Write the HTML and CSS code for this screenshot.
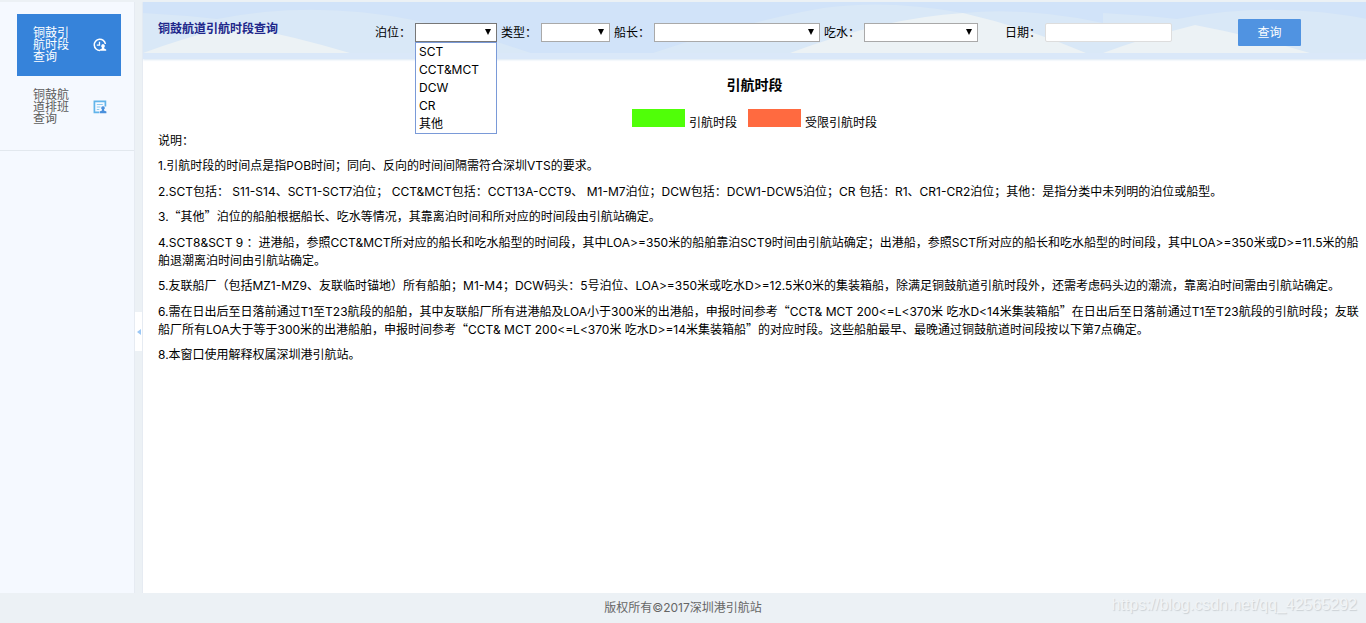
FILE: index.html
```html
<!DOCTYPE html>
<html lang="zh-CN">
<head>
<meta charset="utf-8">
<title>铜鼓航道引航时段查询</title>
<link rel="stylesheet" href="styles.css">
</head>
<body>
<div class="page">
  <div class="workspace">
    <nav class="sidebar">
      <div class="menu">
        <a class="menu-item active" href="#period">
          <span class="menu-text">铜鼓引航时段查询</span>
          <svg class="menu-icon" viewBox="0 0 14 14" fill="none" stroke="#fff">
            <path d="M7 12.4A5.6 5.6 0 1 1 12.4 6" stroke-width="1.5"/>
            <path d="M6.5 3.8V7.2H3.8" stroke-width="1.3"/>
            <path d="M10 6a2 2 0 0 1 1.2 3.5v1l2 1.1v1.2H6.9v-1.2l2-1.1v-1A2 2 0 0 1 10 6z" fill="#fff" stroke="none"/>
          </svg>
        </a>
        <a class="menu-item" href="#schedule">
          <span class="menu-text">铜鼓航道排班查询</span>
          <svg class="menu-icon" viewBox="0 0 14 14" fill="none">
            <path d="M6 12.4H1.4V1.4h11V6.5" stroke="#61b4ea" stroke-width="1.7"/>
            <path d="M3.8 4.5h6M3.8 7h3.6M3.8 9.5h2.5" stroke="#8ccaf0"/>
            <path d="M10 6.2a1.8 1.8 0 0 1 1 3.3v1.1l2.4 1v1.7H6.6v-1.7l2.4-1V9.5a1.8 1.8 0 0 1 1-3.3z" fill="#4a90dc"/>
          </svg>
        </a>
      </div>
    </nav>
    <div class="splitter">
      <button class="collapse" type="button" aria-label="收起菜单"></button>
    </div>
    <main class="main">
      <header class="toolbar">
        <svg class="waves" aria-hidden="true">
          <defs>
            <pattern id="hills" width="960" height="51" patternUnits="userSpaceOnUse">
              <rect width="960" height="51" fill="#d1e3f9"/>
              <path d="M0 11Q38 13 74 17Q170-2 270 18Q330 31 388 51H0z" fill="#d9e8f7"/>
              <path d="M0 51Q40 36 92 23Q150 34 207 51z" fill="#ecf2f5"/>
              <path d="M510 51Q605 19 680 6Q745-3 820 11Q885 5 960 21V51z" fill="#d9e8f7"/>
              <path d="M647 51Q740 16 820 11Q885 26 943 51z" fill="#ecf2f5"/>
            </pattern>
          </defs>
          <rect width="100%" height="51" fill="url(#hills)"/>
        </svg>
        <h1 class="title">铜鼓航道引航时段查询</h1>
        <form class="filters">
          <div class="field">
            <label for="berth">泊位：</label>
            <span class="select berth open">
              <select id="berth"><option></option><option>SCT</option><option>CCT&amp;MCT</option><option>DCW</option><option>CR</option><option>其他</option></select>
              <ul class="options">
                <li>SCT</li><li>CCT&amp;MCT</li><li>DCW</li><li>CR</li><li>其他</li>
              </ul>
            </span>
          </div>
          <div class="field">
            <label for="type">类型：</label>
            <span class="select type"><select id="type"><option></option></select></span>
          </div>
          <div class="field">
            <label for="length">船长：</label>
            <span class="select length"><select id="length"><option></option></select></span>
          </div>
          <div class="field">
            <label for="draft">吃水：</label>
            <span class="select draft"><select id="draft"><option></option></select></span>
          </div>
          <div class="field date-field">
            <label for="date">日期：</label>
            <input id="date" class="date" type="text">
          </div>
          <button class="submit" type="button">查询</button>
        </form>
      </header>
      <section class="content">
        <h2 class="heading">引航时段</h2>
        <div class="legend">
          <span class="swatch green"></span><span>引航时段</span>
          <span class="swatch orange"></span><span>受限引航时段</span>
        </div>
        <div class="notes">
          <p>说明：</p>
          <p>1.引航时段的时间点是指POB时间；同向、反向的时间间隔需符合深圳VTS的要求。</p>
          <p>2.SCT包括： S11-S14、SCT1-SCT7泊位； CCT&amp;MCT包括：CCT13A-CCT9、 M1-M7泊位；DCW包括：DCW1-DCW5泊位；CR 包括：R1、CR1-CR2泊位；其他：是指分类中未列明的泊位或船型。</p>
          <p>3.<span class="wide">“其他”</span>泊位的船舶根据船长、吃水等情况，其靠离泊时间和所对应的时间段由引航站确定。</p>
          <p>4.SCT8&amp;SCT 9 ：进港船，参照CCT&amp;MCT所对应的船长和吃水船型的时间段，其中LOA&gt;=350米的船舶靠泊SCT9时间由引航站确定；出港船，参照SCT所对应的船长和吃水船型的时间段，其中LOA&gt;=350米或D&gt;=11.5米的船舶退潮离泊时间由引航站确定。</p>
          <p>5.友联船厂（包括MZ1-MZ9、友联临时锚地）所有船舶；M1-M4；DCW码头：5号泊位、LOA&gt;=350米或吃水D&gt;=12.5米0米的集装箱船，除满足铜鼓航道引航时段外，还需考虑码头边的潮流，靠离泊时间需由引航站确定。</p>
          <p>6.需在日出后至日落前通过T1至T23航段的船舶，其中友联船厂所有进港船及LOA小于300米的出港船，申报时间参考<span class="wide">“</span>CCT&amp; MCT 200&lt;=L&lt;370米 吃水D&lt;14米集装箱船<span class="wide">”</span>在日出后至日落前通过T1至T23航段的引航时段；友联船厂所有LOA大于等于300米的出港船舶，申报时间参考<span class="wide">“</span>CCT&amp; MCT 200&lt;=L&lt;370米 吃水D&gt;=14米集装箱船<span class="wide">”</span>的对应时段。这些船舶最早、最晚通过铜鼓航道时间段按以下第7点确定。</p>
          <p>8.本窗口使用解释权属深圳港引航站。</p>
        </div>
      </section>
    </main>
  </div>
  <footer class="footer">
    <span>版权所有©2017深圳港引航站</span>
    <span class="watermark">https://blog.csdn.net/qq_42565292</span>
  </footer>
</div>
</body>
</html>
```
FILE: styles.css
```css
* { box-sizing: border-box; }
body {
  margin: 0;
  background: #ecf1f5;
  color: #000;
  font: 12px/18px Inter, "Noto Sans CJK SC", sans-serif;
}
h1, h2, p, ul { margin: 0; padding: 0; }
button, input, select { font: inherit; }
.page { display: flex; flex-direction: column; min-height: 100vh; padding-top: 2px; }
.workspace { display: flex; flex: 1; }

.sidebar { width: 134px; flex: none; background: #f5f9ff; }
.menu { padding: 12px 13px 12px 17px; border-bottom: 1px solid #e2e8ee; }
.menu-item {
  display: flex;
  align-items: center;
  justify-content: space-between;
  height: 62px;
  padding: 0 14px 0 16px;
  color: #5c5c5c;
  line-height: 12px;
  text-decoration: none;
}
.menu-item.active { background: #3683da; color: #fff; }
.menu-text { width: 40px; }
.menu-icon { width: 14px; height: 14px; }

.splitter {
  display: flex;
  align-items: center;
  width: 9px;
  flex: none;
  border: 1px solid #e6ebf2;
  border-width: 0 1px;
  padding-top: 68px;
}
.collapse {
  display: flex;
  align-items: center;
  width: 7px;
  height: 39px;
  padding: 0 0 0 2px;
  border: 0;
  background: #fff;
}
.collapse::before {
  content: "";
  border: 3px solid transparent;
  border-right: 4px solid #9cc8f5;
  border-left: 0;
}

.main { flex: 1; min-width: 0; background: #fff; }
.toolbar {
  position: relative;
  display: flex;
  align-items: center;
  height: 57px;
  padding: 0 65px 0 15px;
  background: #dae8f9;
  box-shadow: 0 1px 2px #dbe8f4;
}
.waves { position: absolute; top: 0; left: 0; width: 100%; height: 51px; }
.title {
  position: relative;
  width: 217px;
  margin-bottom: 4px;
  color: #20268a;
  font-size: 12px;
}
.filters { position: relative; display: flex; flex: 1; align-items: center; gap: 4px; margin-top: 4px; }
.field { display: flex; align-items: center; gap: 4px; white-space: nowrap; }
.date-field { margin-left: 23px; }
.select { position: relative; display: block; height: 19px; }
.select::after {
  content: "";
  position: absolute;
  top: 6px;
  right: 6px;
  border: 3px solid transparent;
  border-top: 6px solid #000;
  border-bottom: 0;
}
.select select {
  display: block;
  width: 100%;
  height: 19px;
  padding: 0 3px;
  border: 1px solid #a9a9a9;
  border-radius: 0;
  background: #fff;
  appearance: none;
}
.select.open select { border-color: #777; }
.berth { width: 82px; }
.type { width: 69px; }
.length { width: 166px; }
.draft { width: 114px; }
.options {
  position: absolute;
  z-index: 2;
  top: 19px;
  left: 0;
  width: 100%;
  border: 1px solid #7a9ad8;
  background: #fff;
  list-style: none;
}
.options li { padding-left: 3px; }
.date { width: 127px; height: 19px; padding: 0 4px; border: 1px solid #ddd; border-radius: 2px; }
.submit {
  width: 63px;
  height: 27px;
  margin-left: auto;
  padding: 0;
  border: 0;
  border-radius: 1px;
  background: #5093e1;
  color: #fff;
}

.content { padding: 17px 0 0 15px; }
.heading { margin-left: -15px; font-size: 14px; line-height: 18px; text-align: center; }
.legend {
  display: flex;
  justify-content: center;
  gap: 4px;
  height: 28px;
  margin: 10px 0 0 -15px;
  padding-top: 5px;
}
.legend span { padding-top: 5px; }
.legend .swatch { width: 53px; height: 18px; padding: 0; }
.green { background: #50ff08; }
.orange { margin-left: 7px; background: #ff6a40; }
.notes p { margin-bottom: 8px; }
.notes p:nth-child(odd) { margin-bottom: 7px; }
.wide { font-family: "Noto Sans CJK SC", sans-serif; line-height: 12px; }

.footer {
  position: relative;
  display: flex;
  align-items: center;
  justify-content: center;
  height: 30px;
  color: #666;
}
.watermark {
  position: absolute;
  right: 9px;
  top: 2px;
  color: #f1f4f6;
  font: 16px/20px "Liberation Sans", Arial, sans-serif;
  text-shadow: 1px 1px 1px #cbd0d4;
}
```
